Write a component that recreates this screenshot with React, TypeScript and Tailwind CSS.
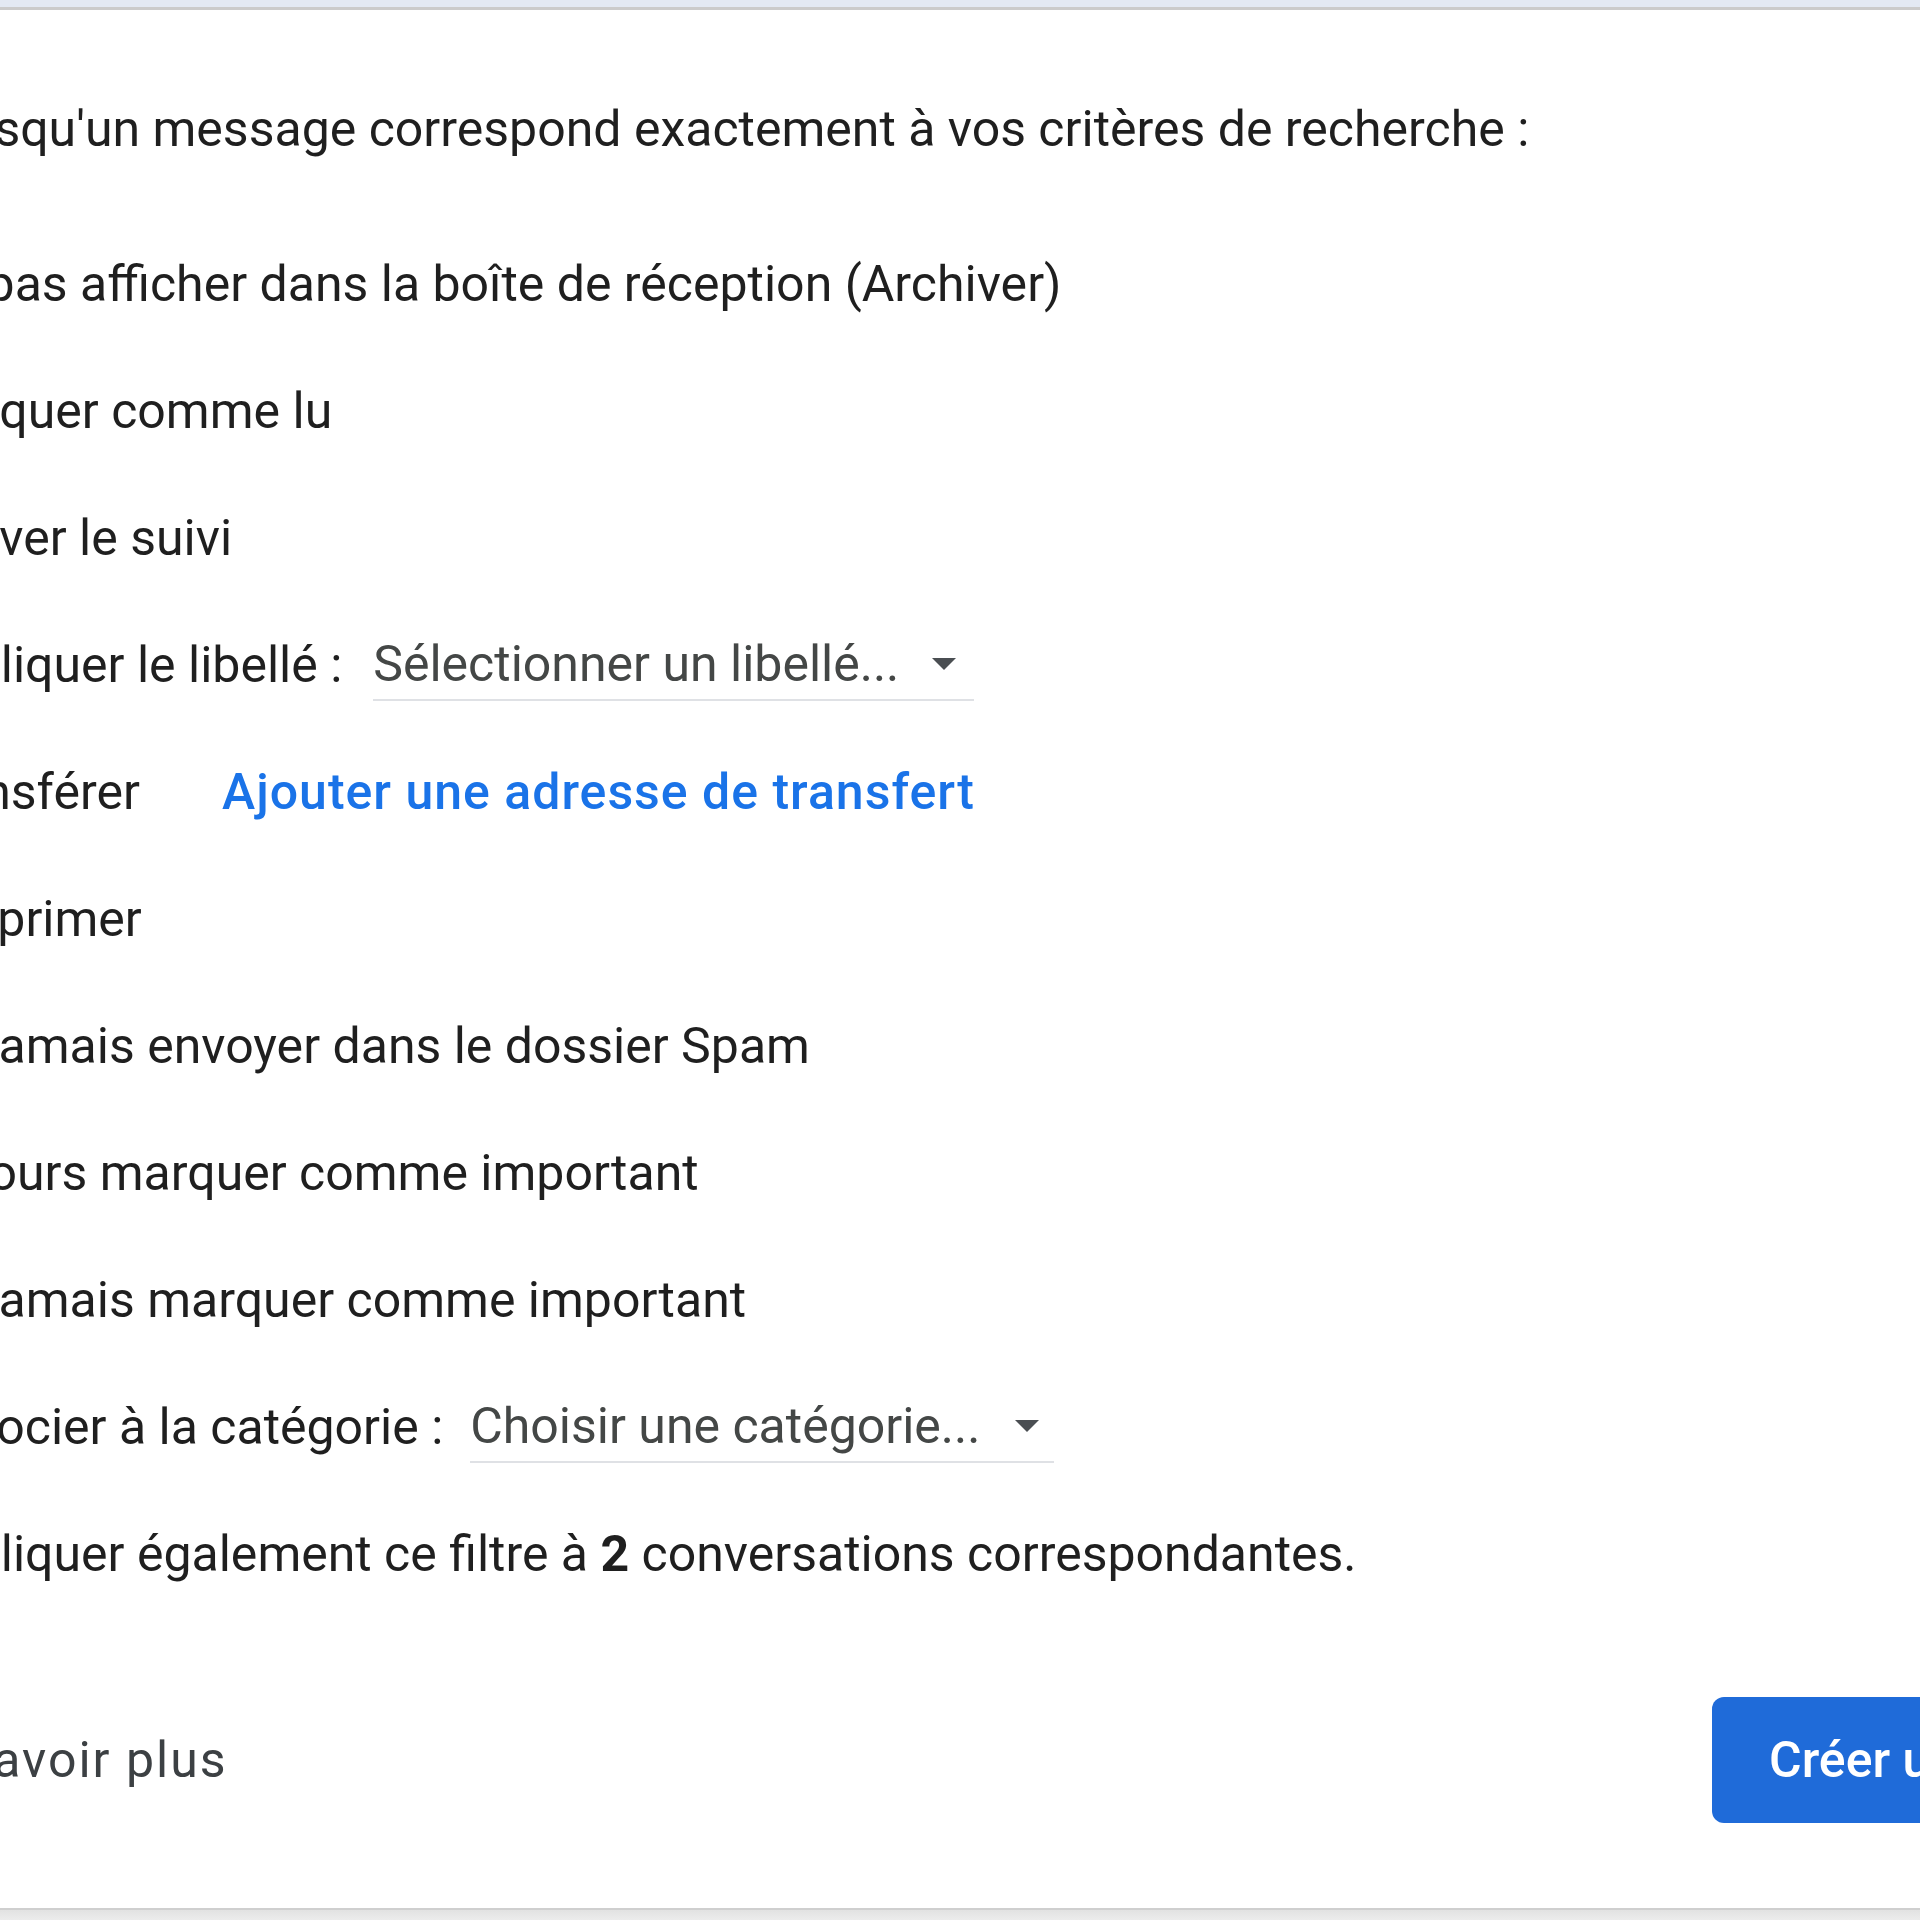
import React from "react";

function Caret() {
  return (
    <svg width="26" height="14" viewBox="0 0 26 14" className="shrink-0">
      <path d="M1 1 L25 1 L13 13 Z" fill="#4a4e52" />
    </svg>
  );
}

export default function App() {
  const labels: React.ReactNode[] = [
    <span>Ne pas afficher dans la boîte de réception (Archiver)</span>,
    <span>Marquer comme lu</span>,
    <span>Activer le suivi</span>,
    <div className="flex items-center">
      <span>Appliquer le libellé :</span>
      <div className="ml-[31px] flex h-[72px] w-[601px] items-center justify-between border-b-[2px] border-[#dfe1e5] pr-[17px] text-[#444746]">
        <span>Sélectionner un libellé...</span>
        <Caret />
      </div>
    </div>,
    <div className="flex items-center">
      <span className="w-[310px]">Transférer</span>
      <span className="text-[50px] font-medium tracking-[1px] text-[#1a73e8]">
        Ajouter une adresse de transfert
      </span>
    </div>,
    <span>Supprimer</span>,
    <span>Ne jamais envoyer dans le dossier Spam</span>,
    <span className="ml-[-19px]">Toujours marquer comme important</span>,
    <span>Ne jamais marquer comme important</span>,
    <div className="flex items-center">
      <span>Associer à la catégorie :</span>
      <div className="ml-[27px] flex h-[72px] w-[584px] items-center justify-between border-b-[2px] border-[#dfe1e5] pr-[14px] text-[#444746]">
        <span>Choisir une catégorie...</span>
        <Caret />
      </div>
    </div>,
    <span>
      Appliquer également ce filtre à <b className="font-bold">2</b> conversations correspondantes.
    </span>,
  ];
  return (
    <div
      className="relative flex h-[1920px] w-[1920px] flex-col overflow-hidden bg-white text-[50px] leading-[60px] text-[#1f1f1f]"
      style={{ fontFamily: "Roboto, 'Noto Sans', sans-serif" }}
    >
      <div className="h-[7px] shrink-0 bg-[#e3e9f3]" />
      <div className="h-[3px] shrink-0 bg-[#cbcbcb]" />
      <div className="ml-[-88px] flex w-[2200px] flex-1 flex-col">
        <div className="mt-[89px] pl-[10px]">
          Lorsqu'un message correspond exactement à vos critères de recherche :
        </div>
        <div className="mt-[61px] flex flex-col">
          {labels.map((l, i) => (
            <div key={i} className="relative flex h-[127px] items-center">
              {l}
            </div>
          ))}
        </div>
        <div className="mt-[80px] flex h-[126px] items-center justify-between">
          <span className="ml-[-21px] tracking-[2px] text-[#3c4043]">En savoir plus</span>
          <button className="h-[126px] w-[400px] rounded-[12px] bg-[#1f6bd9] pl-[57px] text-left text-[50px] font-medium text-white">
            Créer un filtre
          </button>
        </div>
      </div>
      <div className="h-[2px] shrink-0 bg-[#cfcfcf]" />
      <div className="h-[10px] shrink-0 bg-gradient-to-b from-[#e2e2e2] to-[#ececec]" />
    </div>
  );
}
